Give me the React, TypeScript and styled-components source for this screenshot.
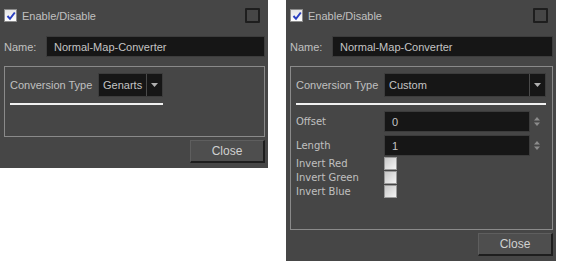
import React from "react";
import styled, { createGlobalStyle } from "styled-components";

const GlobalStyle = createGlobalStyle`
    body {
        margin: 0;
        background: #ffffff;
        font-family: "Liberation Sans", Arial, sans-serif;
    }
`;

const Page = styled.div`
    display: flex;
    align-items: flex-start;
    gap: 18px;
`;

const Panel = styled.div<{ $w: number; $h: number }>`
    width: ${p => p.$w}px;
    height: ${p => p.$h}px;
    background: #464646;
    display: flex;
    flex-direction: column;
    color: #c0c0c0;
    font-size: 11px;
    white-space: nowrap;
    box-sizing: border-box;
`;

const TopRow = styled.div`
    height: 31px;
    display: flex;
    align-items: center;
    padding: 0 8px 0 4px;
`;

const CheckLabel = styled.span`
    margin-left: 5px;
    flex: 1;
`;

const CheckedBox = styled.span`
    width: 11px;
    height: 11px;
    border: 1px solid #8c8c8c;
    background: linear-gradient(#e4e4e4, #ffffff);
    display: flex;
    align-items: center;
    justify-content: center;
`;

const EmptyBox = styled.span`
    width: 11px;
    height: 11px;
    border: 2px solid #1e1e1e;
    border-radius: 1px;
`;

const NameRow = styled.div`
    display: flex;
    align-items: center;
    padding: 5px 3px 0 4px;
    height: 21px;
`;

const NameLabel = styled.span`
    width: 42px;
`;

const TextInput = styled.div<{ $w?: number }>`
    box-sizing: border-box;
    height: 21px;
    ${p => (p.$w ? `width: ${p.$w}px;` : "flex: 1;")}
    background: #161616;
    border: 1px solid #3c3c3c;
    padding-left: 7px;
    display: flex;
    align-items: center;
    color: #c4c4c4;
`;

const Group = styled.div<{ $h: number }>`
    margin: 9px 3px 0 4px;
    height: ${p => p.$h}px;
    border: 1px solid #8a8a8a;
    box-sizing: border-box;
    padding: 6px 6px 0 5px;
`;

const TypeBlock = styled.div<{ $full: boolean }>`
    display: ${p => (p.$full ? "block" : "inline-block")};
    border-bottom: 2px solid #f0f0f0;
    padding-bottom: 6px;
`;

const FieldRow = styled.div`
    display: flex;
    align-items: center;
`;

const FieldLabel = styled.span<{ $alt?: boolean }>`
    width: 88px;
    flex: none;
    font-family: ${p => (p.$alt ? `"DejaVu Sans", Verdana, sans-serif` : "inherit")};
    font-size: ${p => (p.$alt ? "10px" : "11px")};
`;

const Combo = styled.div<{ $full: boolean }>`
    height: 24px;
    box-sizing: border-box;
    ${p => (p.$full ? "flex: 1;" : "")}
    background: #161616;
    border: 1px solid #3c3c3c;
    display: flex;
    align-items: stretch;
`;

const ComboText = styled.span`
    flex: 1;
    display: flex;
    align-items: center;
    padding: 0 4px 0 4px;
    color: #c4c4c4;
`;

const ComboArrow = styled.span`
    width: 15px;
    border-left: 1px solid #4a4a4a;
    display: flex;
    align-items: center;
    justify-content: center;
`;

const Fields = styled.div`
    display: flex;
    flex-direction: column;
    margin-top: 6px;
    gap: 3px;
`;

const Spin = styled.span`
    width: 14px;
    display: flex;
    justify-content: center;
`;

const Checks = styled.div`
    display: flex;
    flex-direction: column;
    gap: 1px;
    margin-top: 1px;
`;

const CheckRow = styled.div`
    display: flex;
    align-items: center;
    height: 13px;
`;

const SmallBox = styled.span`
    width: 11px;
    height: 11px;
    border: 1px solid #9a9a9a;
    background: linear-gradient(135deg, #c8c8c8, #f4f4f4);
`;

const Footer = styled.div`
    display: flex;
    justify-content: flex-end;
    padding: 3px 3px 0 0;
`;

const Button = styled.div`
    width: 75px;
    height: 23px;
    box-sizing: border-box;
    background: #4e4e4e;
    border-top: 1px solid #5e5e5e;
    border-left: 1px solid #5e5e5e;
    border-right: 2px solid #1e1e1e;
    border-bottom: 2px solid #1e1e1e;
    display: flex;
    align-items: center;
    justify-content: center;
    color: #d0d0d0;
    font-size: 12px;
`;

const Tick = () => (
    <svg width="10" height="10" viewBox="0 0 10 10">
        <path d="M1.5 5 L4 7.8 L8.8 1.5" stroke="#2a3fc0" strokeWidth="2" fill="none" />
    </svg>
);

const Triangle = () => (
    <svg width="7" height="4" viewBox="0 0 7 4">
        <path d="M0 0 H7 L3.5 4 Z" fill="#b0b0b0" />
    </svg>
);

const Spinner = () => (
    <svg width="6" height="9" viewBox="0 0 6 9">
        <path d="M0 3.5 L3 0 L6 3.5 Z M0 5.5 L3 9 L6 5.5 Z" fill="#8c8c8c" />
    </svg>
);

const Dialog = ({ custom }: { custom: boolean }) => (
    <Panel $w={custom ? 270 : 268} $h={custom ? 261 : 168}>
        <TopRow>
            <CheckedBox>
                <Tick />
            </CheckedBox>
            <CheckLabel>Enable/Disable</CheckLabel>
            <EmptyBox />
        </TopRow>
        <NameRow>
            <NameLabel>Name:</NameLabel>
            <TextInput>Normal-Map-Converter</TextInput>
        </NameRow>
        <Group $h={custom ? 164 : 71}>
            <TypeBlock $full={custom}>
                <FieldRow>
                    <FieldLabel>Conversion Type</FieldLabel>
                    <Combo $full={custom}>
                        <ComboText>{custom ? "Custom" : "Genarts"}</ComboText>
                        <ComboArrow>
                            <Triangle />
                        </ComboArrow>
                    </Combo>
                </FieldRow>
            </TypeBlock>
            {custom && (
                <>
                    <Fields>
                        {[
                            ["Offset", "0"],
                            ["Length", "1"],
                        ].map(([label, value]) => (
                            <FieldRow key={label}>
                                <FieldLabel $alt>{label}</FieldLabel>
                                <TextInput $w={146}>{value}</TextInput>
                                <Spin>
                                    <Spinner />
                                </Spin>
                            </FieldRow>
                        ))}
                    </Fields>
                    <Checks>
                        {["Invert Red", "Invert Green", "Invert Blue"].map(label => (
                            <CheckRow key={label}>
                                <FieldLabel $alt>{label}</FieldLabel>
                                <SmallBox />
                            </CheckRow>
                        ))}
                    </Checks>
                </>
            )}
        </Group>
        <Footer>
            <Button>Close</Button>
        </Footer>
    </Panel>
);

const App = () => (
    <>
        <GlobalStyle />
        <Page>
            <Dialog custom={false} />
            <Dialog custom />
        </Page>
    </>
);

export default App;
